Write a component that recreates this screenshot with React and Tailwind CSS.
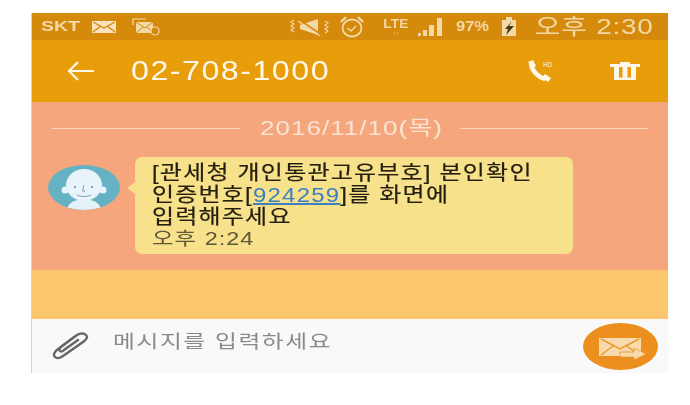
const FONT = "font-['Liberation_Sans','Noto_Sans_CJK_KR',sans-serif]";

const MailIcon = () => (
  <svg width="24" height="12" viewBox="0 0 24 12">
    <rect x="0" y="0" width="24" height="12" fill="#f9e2bd" />
    <path d="M1 1l11 6 11-6M1 11l8-6M23 11l-8-6" fill="none" stroke="#d58a0c" strokeWidth="1.4" />
  </svg>
);

const StatusMailIcon = () => (
  <svg width="28" height="18" viewBox="0 0 28 18">
    <path d="M1 7V1h13" fill="none" stroke="#f4d9a8" strokeWidth="1.2" />
    <rect x="4" y="4" width="17" height="11" fill="#f4d9a8" />
    <path d="M4 4l9 6 8-6M4 15l7-6M21 15l-6-6" fill="none" stroke="#d58a0c" strokeWidth="1" />
    <circle cx="23" cy="13" r="4" fill="#d58a0c" stroke="#f4d9a8" strokeWidth="1.2" />
  </svg>
);

const MuteIcon = () => (
  <svg width="40" height="18" viewBox="0 0 40 18">
    <path d="M10 7l18-6v16L10 11z" fill="#f4d9a8" />
    <path d="M8 1l24 16" stroke="#d58a0c" strokeWidth="1.600" />
    <path d="M8 3l22 15" stroke="#f4d9a8" strokeWidth="1.200" />
    <path d="M4 2L1 4l3 2-3 2 3 2-3 2 3 2M35 3l3 2-3 2 3 2-3 2 3 2-3 2" fill="none" stroke="#f4d9a8" strokeWidth="1.100" />
  </svg>
);

const AlarmIcon = () => (
  <svg width="26" height="24" viewBox="0 0 26 24" fill="none" stroke="#f4d9a8">
    <ellipse cx="13" cy="13" rx="9.500" ry="8.500" strokeWidth="1.800" />
    <path d="M8.500 13l3.500 3 5-5" strokeWidth="1.500" />
    <path d="M2 7l5-5M24 7l-5-5" strokeWidth="2.400" />
  </svg>
);

const SignalIcon = () => (
  <svg width="29" height="19" viewBox="0 0 29 19" fill="#f4d9a8">
    <rect x="0" y="16" width="3" height="3" />
    <rect x="5" y="13" width="4" height="6" />
    <rect x="11" y="8" width="5" height="11" />
    <rect x="19" y="1" width="5" height="18" />
  </svg>
);

const BatteryIcon = () => (
  <svg width="16" height="20" viewBox="0 0 16 20">
    <rect x="5" y="0" width="6" height="3" fill="#f4d9a8" />
    <rect x="1" y="3" width="14" height="16" fill="#f4d9a8" />
    <path d="M11 4l-7 8h3l-2 6 8-9H8z" fill="#4d3a14" />
  </svg>
);

const PhoneHdIcon = () => (
  <svg width="28" height="24" viewBox="0 0 28 24">
    <path d="M4 5c1 7 7 13 14 15" fill="none" stroke="#fff8ea" strokeWidth="4.500" />
    <path d="M1 3l5-2 3 6-4 2zM15 19l3-4 6 4-3 4z" fill="#fff8ea" />
    <text x="16" y="8" fontSize="6.500" fontWeight="700" fill="#f8dcae" fontFamily="Liberation Sans, sans-serif">HD</text>
  </svg>
);

const TrashIcon = () => (
  <svg width="30" height="18" viewBox="0 0 30 18" fill="#fff8ea">
    <rect x="0" y="2" width="30" height="3" />
    <rect x="10" y="0" width="10" height="3" />
    <rect x="4" y="5" width="5" height="13" />
    <rect x="12.500" y="5" width="5" height="13" />
    <rect x="21" y="5" width="5" height="13" />
    <rect x="4" y="15.500" width="22" height="2.500" />
  </svg>
);

const Avatar = () => (
  <svg width="72" height="45" viewBox="0 0 72 45">
    <defs>
      <clipPath id="face">
        <ellipse cx="36" cy="22.500" rx="36" ry="22.500" />
      </clipPath>
    </defs>
    <ellipse cx="36" cy="22.500" rx="36" ry="22.500" fill="#65b2c5" />
    <g clipPath="url(#face)">
      <path d="M18 46c2-7 6-10 12-11h12c6 1 10 4 12 11z" fill="#e4f1f6" />
      <ellipse cx="36" cy="20" rx="18" ry="16" fill="#e8f4f9" />
      <circle cx="17" cy="25" r="3.500" fill="#e8f4f9" />
      <circle cx="55" cy="25" r="3.500" fill="#e8f4f9" />
      <circle cx="27" cy="22" r="1" fill="#5f8796" />
      <circle cx="44" cy="22" r="1" fill="#5f8796" />
      <path d="M36 20l-1.500 6h2.500M29 30c4 2 10 2 14 0" fill="none" stroke="#6f97a6" strokeWidth="0.900" />
    </g>
  </svg>
);

const ClipIcon = () => (
  <svg width="38" height="28" viewBox="0 0 38 28" fill="none" stroke="#666" strokeWidth="2.400" strokeLinecap="round">
    <path d="M22 5L6 17c-4 3-5 6-3 8s5 1 8-1L31 10c4-3 5-5 3-7s-6-2-9 0L9 15c-2 2-2 3-1 4s3 0 4-1l14-10" />
  </svg>
);

const SendIcon = () => (
  <svg width="47" height="23" viewBox="0 0 47 23">
    <rect x="0" y="0" width="42" height="18" fill="#f9d9ae" />
    <path d="M2 1l19 10L40 1M2 17l12-9M40 17L28 8" fill="none" stroke="#ea9a2e" strokeWidth="1.500" />
    <path d="M21 14h14v-4l12 6-12 6v-3H21z" fill="#f9d9ae" stroke="#ea9a2e" strokeWidth="0.800" />
  </svg>
);

export default function App() {
  return (
    <div className={`${FONT} w-[690px] h-[405px] bg-white pt-[13px] pl-[31px] overflow-hidden blur-[0.3px]`}>
      <div className="w-[637px] border-l border-[#f6c99a]">
        {/* status bar */}
        <div className="h-[27px] bg-[#d58a0c] flex items-center pl-[9px] pr-[14px] text-[#f4d9a8]">
          <span className="block w-[43px] text-[15px] font-bold origin-left scale-x-[1.3]">SKT</span>
          <span className="ml-[8px] flex"><MailIcon /></span>
          <span className="ml-[16px] flex"><StatusMailIcon /></span>
          <span className="ml-[130px] flex"><MuteIcon /></span>
          <span className="ml-[9px] flex"><AlarmIcon /></span>
          <span className="ml-[17px] w-[28px] flex flex-col items-center leading-none">
            <span className="text-[12px] font-bold scale-x-[1.15]">LTE</span>
            <span className="text-[6px]">↓↑</span>
          </span>
          <span className="ml-[8px] flex"><SignalIcon /></span>
          <span className="ml-[9px] w-[39px] text-[15px] font-bold origin-left scale-x-[1.1]">97%</span>
          <span className="ml-[6px] flex"><BatteryIcon /></span>
          <span className="ml-auto text-[22px] tracking-[0.6px] whitespace-nowrap origin-right scale-x-[1.27]">오후 2:30</span>
        </div>
        {/* app bar */}
        <div className="h-[62px] bg-[#e89d0b] flex items-center text-[#fff8ea] pl-[35px] pr-[28px]">
          <svg width="28" height="20" viewBox="0 0 28 20" fill="none" stroke="currentColor" strokeWidth="2.200">
            <path d="M27 10H2M11 1l-9 9 9 9" />
          </svg>
          <span className="ml-[36px] text-[28px] tracking-[1.3px] whitespace-nowrap origin-left scale-x-[1.15]">02-708-1000</span>
          <span className="ml-auto flex"><PhoneHdIcon /></span>
          <span className="ml-[55px] flex"><TrashIcon /></span>
        </div>
        {/* messages */}
        <div className="h-[168px] bg-[#f5a67c] pt-[12px]">
          <div className="flex items-center px-[20px] text-[#fbe3d3]">
            <div className="flex-1 h-px bg-[#fbd4bd]" />
            <span className="mx-[20px] w-[180px] text-[20px] leading-[28px] tracking-[0.8px] whitespace-nowrap origin-left scale-x-[1.3]">2016/11/10(목)</span>
            <div className="flex-1 h-px bg-[#fbd4bd]" />
          </div>
          <div className="flex mt-[15px] pl-[16px]">
            <div className="mt-[8px] flex"><Avatar /></div>
            <div className="ml-[7px] mt-[25px] w-0 h-0 border-y-[6px] border-y-transparent border-r-[8px] border-r-[#f7e18a]" />
            <div className="w-[438px] h-[97px] bg-[#f7e18a] rounded-[7px] pl-[17px] pt-[5px] text-[#241f10] text-[20px] leading-[22px] tracking-[1px] [-webkit-text-stroke:0.2px_#241f10]">
              <div className="whitespace-nowrap origin-left scale-x-[1.2]">[관세청 개인통관고유부호] 본인확인</div>
              <div className="whitespace-nowrap origin-left scale-x-[1.2]">
                인증번호[<span className="text-[#3b7fc4] underline [-webkit-text-stroke:0]">924259</span>]를 화면에
              </div>
              <div className="whitespace-nowrap origin-left scale-x-[1.2]">입력해주세요</div>
              <div className="text-[18px] tracking-[0.8px] text-[#5f573a] whitespace-nowrap origin-left scale-x-[1.3] [-webkit-text-stroke:0]">오후 2:24</div>
            </div>
          </div>
        </div>
        {/* strip */}
        <div className="h-[49px] bg-[#fcc66f]" />
        {/* input */}
        <div className="h-[54px] bg-[#f9f9fa] flex items-center pl-[20px] pr-[10px]">
          <ClipIcon />
          <span className="ml-[23px] -mt-[8px] text-[18px] tracking-[1.2px] text-[#8a8a8a] whitespace-nowrap origin-left scale-x-[1.32]">메시지를 입력하세요</span>
          <div className="ml-auto w-[75px] h-[47px] rounded-[50%] bg-[#ec8f1e] flex items-center justify-center mt-[1px] pt-[5px] pl-[3px]">
            <SendIcon />
          </div>
        </div>
      </div>
    </div>
  );
}
